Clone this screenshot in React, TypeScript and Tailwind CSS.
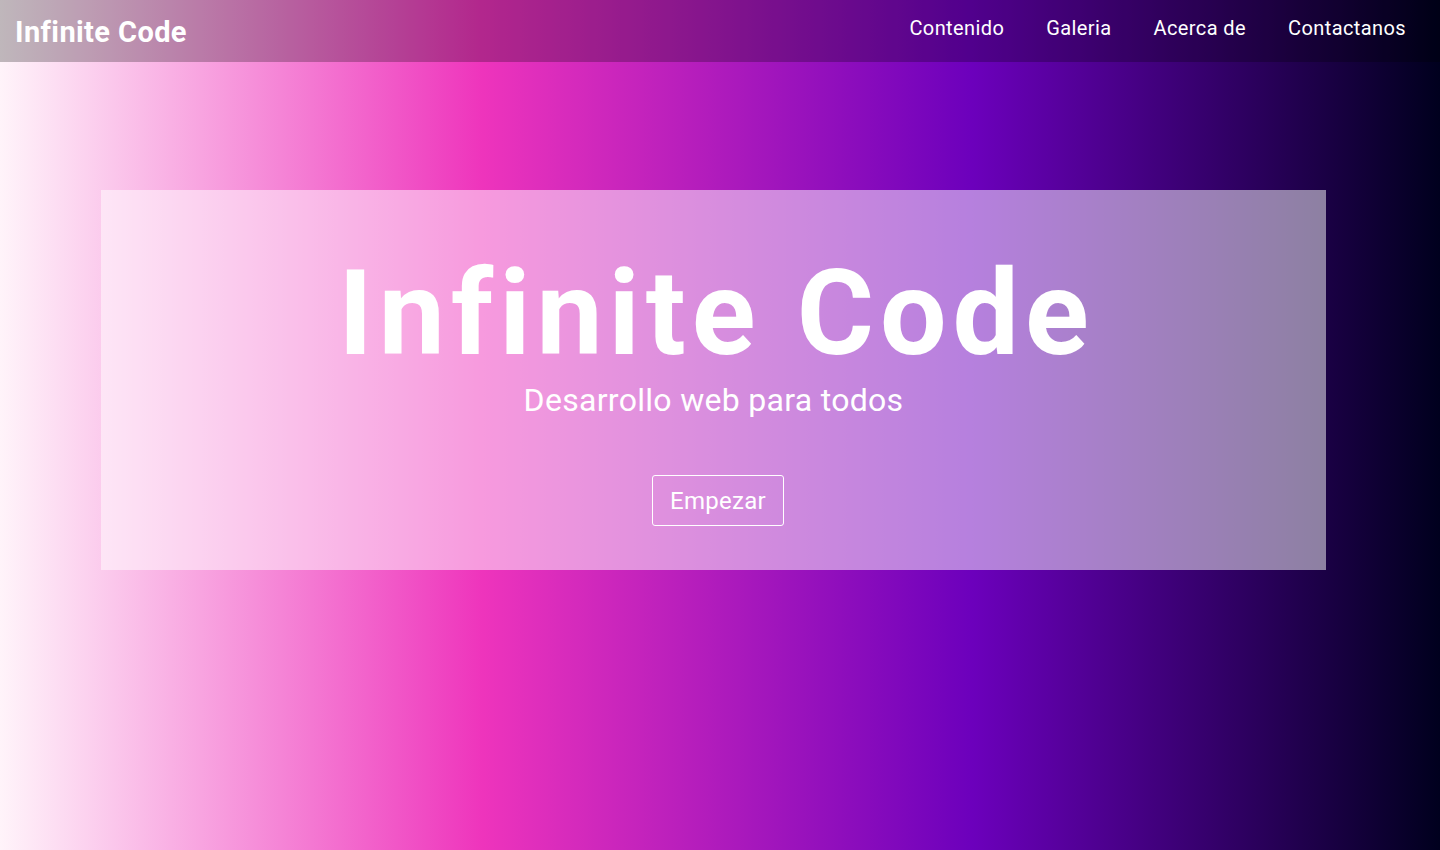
const navLinks = ["Contenido", "Galeria", "Acerca de", "Contactanos"];

export default function App() {
  return (
    <div
      className="min-h-screen w-full bg-[linear-gradient(to_right,#fff4fa_0%,#ee34bc_33.5%,#6c00bc_67.5%,#00001e_100%)] text-white"
      style={{ fontFamily: "Roboto, 'Liberation Sans', sans-serif" }}
    >
      {/* Header */}
      <header className="h-[62px] bg-black/25 flex items-center justify-between pl-[15px] pr-[34px]">
        <a href="#" className="text-[29px] font-bold tracking-[0.4px] leading-none mt-[2px]">
          Infinite Code
        </a>
        <nav className="flex items-center gap-[42px] -mt-[7px]">
          {navLinks.map((link) => (
            <a key={link} href="#" className="text-[20px] tracking-[0.4px] leading-none">
              {link}
            </a>
          ))}
        </nav>
      </header>

      {/* Hero */}
      <section className="pt-[128px] px-[101px] pr-[114px]">
        <div className="h-[380px] bg-white/50 flex flex-col items-center">
          <h1 className="mt-[65px] text-[118px] font-bold leading-none tracking-[6px] pl-[6px]">
            Infinite Code
          </h1>
          <p className="mt-[11px] text-[32px] tracking-[0.3px] leading-none">Desarrollo web para todos</p>
          <button className="mt-[59px] ml-[9px] h-[51px] px-[17px] border border-white rounded-[3px] text-[24px] tracking-[0.3px] leading-none">
            Empezar
          </button>
        </div>
      </section>
    </div>
  );
}
